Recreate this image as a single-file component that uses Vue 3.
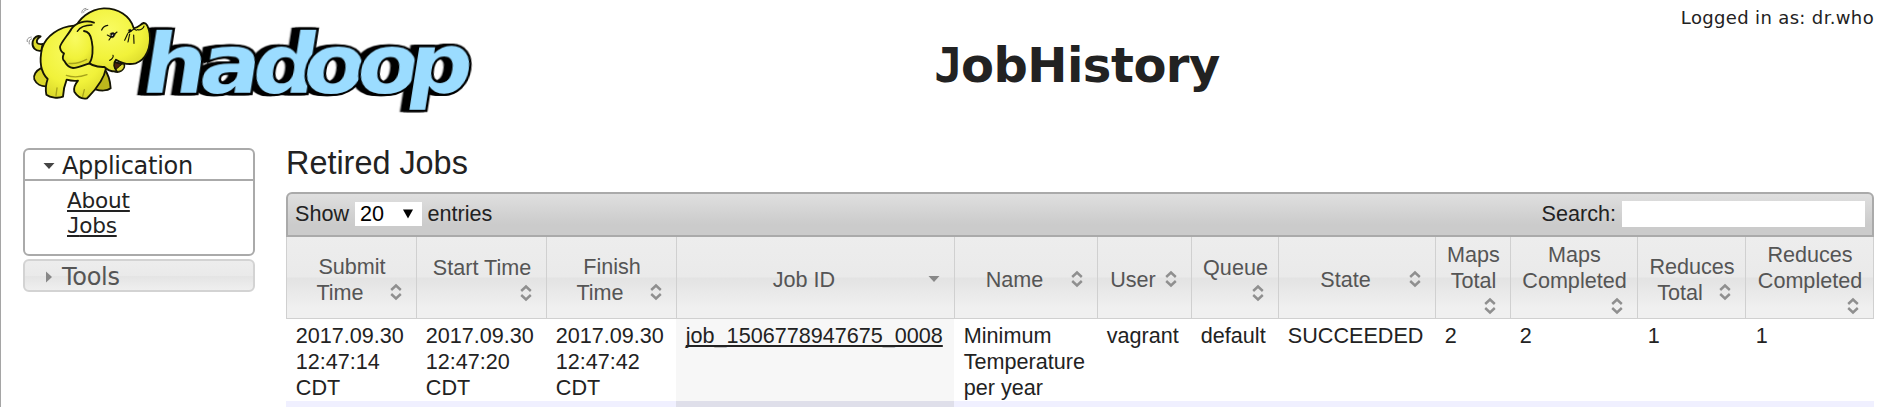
<script setup>
const columns = [
  { lines: ['Submit', 'Time'], sort: 'both' },
  { lines: ['Start Time'], sort: 'both' },
  { lines: ['Finish', 'Time'], sort: 'both' },
  { lines: ['Job ID'], sort: 'desc' },
  { lines: ['Name'], sort: 'both' },
  { lines: ['User'], sort: 'both' },
  { lines: ['Queue'], sort: 'both' },
  { lines: ['State'], sort: 'both' },
  { lines: ['Maps', 'Total'], sort: 'both' },
  { lines: ['Maps', 'Completed'], sort: 'both' },
  { lines: ['Reduces', 'Total'], sort: 'both' },
  { lines: ['Reduces', 'Completed'], sort: 'both' },
]
const job = [
  ['2017.09.30', '12:47:14', 'CDT'],
  ['2017.09.30', '12:47:20', 'CDT'],
  ['2017.09.30', '12:47:42', 'CDT'],
  ['job_1506778947675_0008'],
  ['Minimum', 'Temperature', 'per year'],
  ['vagrant'],
  ['default'],
  ['SUCCEEDED'],
  ['2'],
  ['2'],
  ['1'],
  ['1'],
]
</script>

<template>
  <div class="page">
    <header class="header">
      <svg class="logo" viewBox="0 0 1470 390" width="490" height="130">
        <defs>
          <radialGradient id="skin" cx="0.45" cy="0.35" r="0.75">
            <stop offset="0" stop-color="#f9fb62" />
            <stop offset="0.6" stop-color="#f1f23a" />
            <stop offset="1" stop-color="#d3d026" />
          </radialGradient>
        </defs>
        <g transform="translate(0 279) skewX(-9) scale(1.1 1)">
          <text class="wordmark" x="379 536 680 818 965 1103" y="0">hadoop</text>
        </g>
        <g stroke="#151505" stroke-width="5.5" stroke-linejoin="round" stroke-linecap="round">
          <path fill="#d9d62a" d="M122 205C108 212 99 226 103 238C109 252 124 260 140 259L152 225Z" />
          <path fill="#bdb71c" d="M312 205C325 222 331 246 332 265C322 273 302 273 286 268L280 240Z" />
          <path fill="#dedb2c" d="M124 152C106 155 95 142 98 125C101 111 113 106 122 109C115 113 109 120 111 128C114 134 121 133 128 132Z" />
          <path fill="url(#skin)" d="M222 77C178 80 137 108 126 145C117 185 122 216 143 237C137 254 136 269 139 284C151 293 175 296 189 290C190 271 194 254 200 239Q217 244 234 242C225 253 220 263 223 275C231 288 245 298 261 295C274 281 310 248 318 205L330 140Z" />
          <path fill="#4d2110" d="M332 183C336 194 338 209 345 215C357 219 374 211 373 194Z" />
          <path fill="url(#skin)" d="M224 88C235 58 269 27 311 25C354 24 391 48 401 84C413 86 421 72 431 69C442 68 446 84 449 101C454 143 438 179 407 190C384 195 362 188 348 179C339 190 341 204 352 214C333 216 319 207 313 201C292 202 270 195 256 180Z" />
          <path fill="#dfdc36" d="M349 207C356 202 363 193 370 191C378 202 365 216 352 214Z" stroke-width="3" />
          <path fill="url(#skin)" d="M282 68C257 59 226 68 214 87C207 101 179 131 180 142C182 154 187 158 192 160C187 171 187 179 193 183C199 194 205 203 219 204C235 204 250 195 267 191C279 177 280 145 275 122C272 104 262 94 252 93" />
          <path fill="none" d="M232 94C241 79 260 75 276 75M305 90C309 81 316 77 323 76" stroke-width="4" />
          <path fill="none" d="M322 105L333 111L351 96M333 111L327 120M385 98L402 87L409 91M383 101L374 121M389 102L384 126M401 105L402 130M412 89C421 92 432 84 432 78M329 181C338 178 341 169 339 166" stroke-width="3.5" />
          <path d="M331 100C338 96 343 97 346 103C342 114 337 116 332 111ZM385 90C389 86 394 87 396 93L388 98Z" stroke-width="1" fill="#111" />
          <path fill="#fff" stroke="none" d="M334 106L340 103L338 108Z" />
          <path fill="none" stroke="#a7a31b" stroke-width="4" d="M171 264L168 286M253 269L248 289M199 226C220 233 239 232 261 224M207 190C230 193 249 184 260 178" />
        </g>
        <path d="M246 40C245 32 248 27 259 25M251 38C251 32 255 29 265 28M82 126C80 117 84 113 95 111M88 133C86 124 88 119 96 116" fill="none" stroke="#8c8c8c" stroke-width="3" />
      </svg>
      <h1 class="title"><span class="hook">J</span>obHistory</h1>
      <div class="login">Logged in as: dr.who</div>
    </header>

    <div class="columns">
      <nav class="nav">
        <section class="panel">
          <h3 class="panel-head">
            <svg class="arrow" width="12" height="12" viewBox="0 0 12 12"><path d="M0.5 3H11.5L6 9Z" fill="#454545" /></svg>Application
          </h3>
          <ul class="links">
            <li><a>About</a></li>
            <li><a><span class="hook">J</span>obs</a></li>
          </ul>
        </section>
        <h3 class="panel-head closed">
          <svg class="arrow" width="12" height="12" viewBox="0 0 12 12"><path d="M3 0.5L9 6L3 11.5Z" fill="#888" /></svg>Tools
        </h3>
      </nav>

      <main class="content">
        <h2 class="heading">Retired Jobs</h2>
        <div class="toolbar">
          <span>Show</span>
          <span class="select">20<svg width="10" height="10" viewBox="0 0 10 10"><path d="M0 0.5H10L5 9.5Z" fill="#000" /></svg></span>
          <span>entries</span>
          <span class="search-label">Search:</span>
          <span class="search"></span>
        </div>
        <div class="row head">
          <div v-for="(c, i) in columns" :key="i" class="th">
            <div class="th-inner">
              <template v-for="(l, k) in c.lines" :key="k"><br v-if="k">{{ l }}</template>
              <svg class="sort" width="24" height="24" viewBox="0 0 24 24">
                <path v-if="c.sort === 'desc'" d="M6.5 9H17.5L12 15Z" fill="#888" />
                <path v-else d="M7.2 10L12 5.5L16.8 10M7.2 14L12 18.5L16.8 14" fill="none" stroke="#8f8f8f" stroke-width="2.4" />
              </svg>
            </div>
          </div>
        </div>
        <div class="row body">
          <div v-for="(cell, i) in job" :key="i" class="td" :class="{ sorted: i === 3 }">
            <a v-if="i === 3">{{ cell[0] }}</a>
            <template v-else><div v-for="l in cell" :key="l">{{ l }}</div></template>
          </div>
        </div>
        <div class="row even">
          <div v-for="(c, i) in columns" :key="i" :class="{ sorted: i === 3 }"></div>
        </div>
      </main>
    </div>
  </div>
</template>

<style>
body { background: #fff; }
</style>

<style scoped>
.page {
  box-sizing: border-box;
  width: 1893px;
  height: 407px;
  overflow: hidden;
  border-left: 1px solid #a5a5a5;
  color: #222;
  font-family: "Liberation Sans", Arial, sans-serif;
  font-size: 21.6px;
  line-height: 26px;
}
h1, h2, h3, ul { margin: 0; padding: 0; font-weight: normal; list-style: none; }
.header {
  display: flex;
  align-items: flex-start;
  height: 148px;
  font-family: "DejaVu Sans", Verdana, sans-serif;
}
.logo { display: block; flex: none; margin-left: -1px; }
.wordmark {
  font: bold 246px "DejaVu Sans", sans-serif;
  fill: #9bdcff;
  stroke: #000;
  stroke-width: 14px;
  stroke-linejoin: miter;
  paint-order: stroke;
  filter: drop-shadow(-9px 0 0 #000) drop-shadow(-9px 0 0 #000);
}
.hook { font-family: "DejaVu Sans Mono", monospace; letter-spacing: -0.04em; }
.title {
  margin: 36px 0 0 444px;
  font-size: 48px;
  line-height: 58px;
  font-weight: bold;
  letter-spacing: -0.5px;
}
.title .hook { letter-spacing: -2px; }
.login { margin: 5px 19px 0 auto; font-size: 18px; letter-spacing: 0.35px; }
.columns { display: flex; }
.nav {
  flex: none;
  width: 232px;
  margin-left: 22px;
  font-family: "DejaVu Sans", Verdana, sans-serif;
}
.panel {
  box-sizing: border-box;
  height: 108px;
  border: 2px solid #aaa;
  border-radius: 6px;
}
.panel-head {
  display: flex;
  align-items: center;
  box-sizing: border-box;
  height: 31px;
  padding: 2px 0 0 18px;
  border-bottom: 2px solid #aaa;
  font-size: 24px;
  letter-spacing: -0.3px;
}
.arrow { margin-right: 7px; }
.closed {
  height: 33px;
  margin-top: 3px;
  border: 2px solid #d3d3d3;
  border-radius: 6px;
  color: #555;
  background: linear-gradient(#ededed 0, #eaeaea 50%, #e4e4e4 52%, #efefef 100%);
}
.links { padding: 7px 0 0 42px; font-size: 21.6px; line-height: 25px; letter-spacing: -0.2px; }
a { text-decoration: underline; text-decoration-thickness: 2px; text-underline-offset: 2px; text-decoration-skip-ink: none; }
.content { width: 1588px; margin-left: 31px; }
.heading { height: 44px; padding-top: 1px; box-sizing: border-box; font-size: 32.4px; line-height: 29px; }
.toolbar {
  display: flex;
  align-items: center;
  box-sizing: border-box;
  height: 45px;
  padding: 0 7px 2px 7px;
  border: 2px solid #aaa;
  border-radius: 6px 6px 0 0;
  background: linear-gradient(#dfdfdf 0, #cbcbcb 75%, #cbcbcb 100%);
}
.select {
  display: flex;
  align-items: center;
  justify-content: space-between;
  box-sizing: border-box;
  width: 67px;
  height: 24px;
  margin: 0 6px 0 5.5px;
  padding: 0 9px 0 5.5px;
  background: #fff;
  color: #000;
}
.search-label { margin-left: auto; }
.search { width: 243px; height: 26px; margin-left: 6px; background: #fff; }
.row {
  display: grid;
  grid-template-columns: 130px 130px 130px 278px 143px 94px 87px 157px 75px 127px 108px 129px;
}
.head { height: 82px; color: #555; }
.th {
  display: flex;
  align-items: center;
  box-sizing: border-box;
  padding: 4px 8px 0 9px;
  border-left: 1px solid #d0d0d0;
  border-bottom: 1px solid #d0d0d0;
  background: linear-gradient(#ededed 0, #eaeaea 49%, #e3e3e3 51%, #f0f0f0 88%, #f0f0f0 100%);
}
.th:last-child { border-right: 1px solid #d0d0d0; }
.th-inner { display: flow-root; width: 100%; text-align: center; }
.sort { float: right; display: block; }
.body { height: 82px; }
.td { padding: 4px 0 0 9.8px; white-space: nowrap; }
.td:nth-last-child(-n + 2) { padding-left: 10.8px; }
.body .sorted { background: #f7f7f7; }
.even { height: 6px; background: #f0f0ff; }
.even .sorted { background: #dfdfea; }
</style>
